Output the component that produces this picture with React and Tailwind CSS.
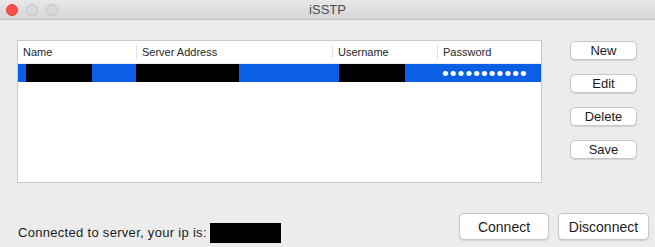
import React from "react";

const font = { fontFamily: '"Liberation Sans", Arial, sans-serif' };

const Btn = ({ label, className }) => (
  <button
    type="button"
    className={`flex items-center justify-center bg-white border border-[#c6c6c6] rounded-[5px] shadow-[0_1px_1px_rgba(0,0,0,0.12)] text-[#1c1c1c] leading-none ${className}`}
  >
    {label}
  </button>
);

const HeaderCell = ({ label, width, last }) => (
  <div className={`relative flex items-center h-full pl-[5px] ${width}`}>
    <span className="text-[11px] text-[#262626]">{label}</span>
    {!last && <div className="absolute right-0 top-[4px] bottom-[4px] w-px bg-[#e2e2e2]" />}
  </div>
);

const App = () => (
  <div className="w-[655px] h-[247px] bg-[#ececec] flex flex-col overflow-hidden" style={font}>
    {/* title bar */}
    <div className="relative h-[20px] flex items-center bg-gradient-to-b from-[#e8e8e8] to-[#d5d5d5] border-b border-[#c2c2c2]">
      <div className="flex items-center gap-[8px] pl-[6px]">
        <div className="w-[12px] h-[12px] rounded-full bg-[#fd4e48] border border-[#e0433d]" />
        <div className="w-[12px] h-[12px] rounded-full bg-[#d9d9d9] border border-[#c4c4c4]" />
        <div className="w-[12px] h-[12px] rounded-full bg-[#d9d9d9] border border-[#c4c4c4]" />
      </div>
      <div className="absolute inset-0 flex items-center justify-center text-[13px] text-[#4b4b4b]">iSSTP</div>
    </div>

    {/* main */}
    <div className="flex pt-[20px] pl-[17px]">
      <div className="w-[525px] h-[143px] bg-white border border-[#c9c9c9] flex flex-col">
        <div className="flex h-[23px] border-b border-[#ececec]">
          <HeaderCell label="Name" width="w-[119px]" />
          <HeaderCell label="Server Address" width="w-[196px]" />
          <HeaderCell label="Username" width="w-[105px]" />
          <HeaderCell label="Password" width="flex-1" last />
        </div>
        <div className="flex items-center h-[18px] bg-[#0a5fe4]">
          <div className="w-[8px]" />
          <div className="w-[66px] h-full bg-black" />
          <div className="w-[44px]" />
          <div className="w-[103px] h-full bg-black" />
          <div className="w-[100px]" />
          <div className="w-[66px] h-full bg-black" />
          <div className="w-[37px]" />
          <span className="text-[19px] leading-none tracking-[1.15px] text-white">•••••••••••</span>
        </div>
      </div>

      <div className="flex flex-col gap-[14px] mt-[1px] ml-[28px]">
        <Btn label="New" className="w-[67px] h-[19px] text-[13px]" />
        <Btn label="Edit" className="w-[67px] h-[19px] text-[13px]" />
        <Btn label="Delete" className="w-[67px] h-[19px] text-[13px]" />
        <Btn label="Save" className="w-[67px] h-[19px] text-[13px]" />
      </div>
    </div>

    {/* bottom */}
    <div className="flex flex-1 items-end justify-between pl-[18px] pr-[6px]">
      <div className="flex items-center mb-[4px]">
        <span className="text-[13px] tracking-[0.3px] text-[#1c1c1c]">Connected to server, your ip is:</span>
        <div className="w-[71px] h-[20px] bg-black ml-[3px]" />
      </div>
      <div className="flex gap-[9px] mb-[7px]">
        <Btn label="Connect" className="w-[90px] h-[27px] text-[14px]" />
        <Btn label="Disconnect" className="w-[91px] h-[27px] text-[14px]" />
      </div>
    </div>
  </div>
);

export default App;
